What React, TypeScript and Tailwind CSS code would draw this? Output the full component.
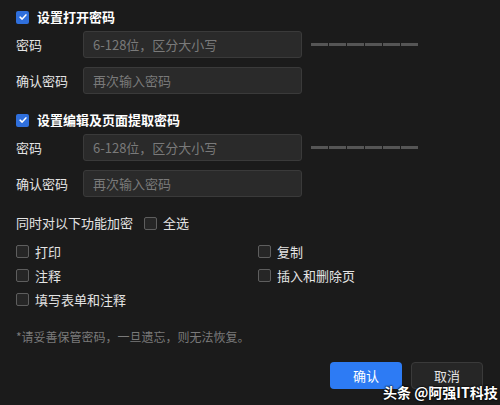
import React, { useState } from 'react';

const font = { fontFamily: '"Noto Sans CJK SC", "Noto Sans", sans-serif' };

const Check: React.FC<{ checked: boolean; onChange: () => void }> = ({ checked, onChange }) => (
  <button
    onClick={onChange}
    className={`w-[13px] h-[13px] rounded-[2px] flex items-center justify-center shrink-0 ${
      checked ? 'bg-[#2f6fdc]' : 'bg-[#262626] border border-[#5e5e5e]'
    }`}
  >
    {checked && (
      <svg viewBox="0 0 12 12" className="w-[10px] h-[10px]">
        <path d="M2.5 6.2 L5 8.5 L9.5 3.5" fill="none" stroke="#fff" strokeWidth="1.8" strokeLinecap="round" strokeLinejoin="round" />
      </svg>
    )}
  </button>
);

const Field: React.FC<{ label: string; placeholder: string; strength?: boolean }> = ({ label, placeholder, strength }) => (
  <div className="flex items-center h-[27px]">
    <span className="w-[67px] text-[13px] text-[#e4e4e4]">{label}</span>
    <input
      type="password"
      placeholder={placeholder}
      className="w-[219px] h-[27px] rounded-[3px] bg-[#2a2a2a] border border-[#3a3a3a] px-[9px] text-[13px] text-white placeholder-[#7a7a7a] outline-none"
    />
    {strength && (
      <div className="ml-[9px] flex gap-[1px]">
        {[0, 1, 2, 3, 4, 5].map(i => (
          <div key={i} className="w-[17px] h-[3px] bg-[#555555]" />
        ))}
      </div>
    )}
  </div>
);

const Section: React.FC<{ title: string }> = ({ title }) => {
  const [on, setOn] = useState(true);
  return (
    <>
      <div className="flex items-center gap-[8px] h-[20px]">
        <Check checked={on} onChange={() => setOn(!on)} />
        <span className="text-[13px] font-bold text-white">{title}</span>
      </div>
      <div className="mt-[4px] flex flex-col gap-[9px]">
        <Field label="密码" placeholder="6-128位，区分大小写" strength />
        <Field label="确认密码" placeholder="再次输入密码" />
      </div>
    </>
  );
};

const perms = [
  { key: 'print', label: '打印' },
  { key: 'copy', label: '复制' },
  { key: 'annot', label: '注释' },
  { key: 'pages', label: '插入和删除页' },
  { key: 'forms', label: '填写表单和注释' },
];

export default function App() {
  const [picked, setPicked] = useState<Record<string, boolean>>({});
  const all = perms.every(p => picked[p.key]);
  const toggleAll = () => {
    const next: Record<string, boolean> = {};
    perms.forEach(p => (next[p.key] = !all));
    setPicked(next);
  };

  return (
    <div className="relative w-[500px] h-[405px] bg-[#1b1b1b] px-4 pt-[7px] overflow-hidden" style={font}>
      <Section title="设置打开密码" />
      <div className="mt-[16px]">
        <Section title="设置编辑及页面提取密码" />
      </div>

      <div className="mt-[16px] flex items-center h-[20px] text-[13px] text-[#e4e4e4]">
        <span>同时对以下功能加密</span>
        <div className="ml-[11px] flex items-center gap-[6px]">
          <Check checked={all} onChange={toggleAll} />
          <span>全选</span>
        </div>
      </div>

      <div className="mt-[8px] grid grid-cols-[242px_1fr] gap-y-[3px] text-[13px] text-[#e4e4e4]">
        {perms.map(p => (
          <div key={p.key} className="flex items-center gap-[6px] h-[21px]">
            <Check checked={!!picked[p.key]} onChange={() => setPicked({ ...picked, [p.key]: !picked[p.key] })} />
            <span>{p.label}</span>
          </div>
        ))}
      </div>

      <p className="mt-[18px] text-[12px] text-[#7a7a7a]">*请妥善保管密码，一旦遗忘，则无法恢复。</p>

      <div className="mt-[16px] flex justify-end gap-[9px] pr-[1px]">
        <button className="w-[72px] h-[27px] rounded-[4px] bg-[#2d7bf4] text-[13px] text-white">确认</button>
        <button className="w-[72px] h-[27px] rounded-[4px] bg-[#262626] border border-[#3a3a3a] text-[13px] text-[#e4e4e4]">取消</button>
      </div>

      <div
        className="absolute left-[383px] top-[385px] text-[14px] font-bold text-white leading-none"
        style={{ textShadow: '0 0 2px #000, 0 0 2px #000' }}
      >
        头条 @阿强IT科技
      </div>
    </div>
  );
}
